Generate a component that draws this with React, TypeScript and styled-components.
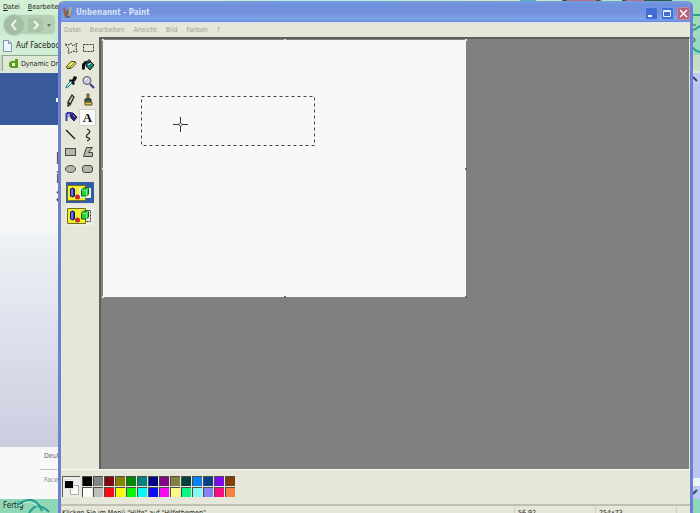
import React from "react";
import styled, { createGlobalStyle } from "styled-components";

const GlobalStyle = createGlobalStyle`
  * { box-sizing: border-box; }
  body { margin: 0; overflow: hidden; font: 8px/12px "DejaVu Sans Condensed", "DejaVu Sans", Tahoma, sans-serif; color: #222; }
  button { font: inherit; padding: 0; border: 0; background: none; color: inherit; }
  svg { display: block; flex: none; }
`;

const Desktop = styled.div`
  position: relative;
  height: 100vh;
  overflow: hidden;
`;

/* ---------- browser behind ---------- */
const Browser = styled.div`
  display: flex;
  flex-direction: column;
  height: 100%;
  background: #cfedcf;
`;
const BrowserMenu = styled.nav`
  display: flex;
  gap: 8px;
  height: 14px;
  padding: 0 0 0 3px;
  background: linear-gradient(90deg, #d3f0d5 0 30%, #bde9ef 45%, #cfeccb 70%, #9fddbd);
  font-size: 7px;
  line-height: 14px;
  u { text-underline-offset: 1px; }
  svg { margin-left: auto; }
`;
const NavBar = styled.div`
  display: flex;
  align-items: center;
  justify-content: space-between;
  height: 22px;
  padding-left: 2px;
  background: linear-gradient(90deg, #cdebd0, #a0dcb9);
`;
const Bookmarks = styled.div`
  display: flex;
  align-items: center;
  gap: 4px;
  height: 19px;
  padding-left: 3px;
  background: linear-gradient(90deg, #d4efd6, #9bd9bd);
  a { flex: 1; color: #222; text-decoration: none; white-space: nowrap; }
`;
const TabStrip = styled.div`
  display: flex;
  height: 18px;
  padding-left: 2px;
  background: #c9dcc6;
  border-bottom: 2px solid #dfe8da;
`;
const BrowserTab = styled.button`
  display: flex;
  align-items: center;
  gap: 3px;
  width: 100px;
  padding-left: 6px;
  border: 1px solid #8fa78d;
  border-bottom: 0;
  background: #dde9d5;
  font-size: 7px;
  white-space: nowrap;
`;
const Content = styled.div`
  flex: 1;
  min-height: 0;
  display: flex;
`;
const WebPage = styled.main`
  flex: 1;
  display: flex;
  flex-direction: column;
`;
const BlueBanner = styled.header`
  display: flex;
  align-items: center;
  height: 52px;
  padding: 2px 0 0 56px;
  background: #38599b;
  &::before { content: ""; width: 3px; height: 4px; background: #fff; }
`;
const Article = styled.section`
  flex: 1;
  padding: 24px 0 0 56px;
  background: linear-gradient(#f8f8f9 30%, #eaf0f3 38%, #e0e3ee 60%, #ccccdf);
  color: #1f3564;
  font: bold 16px/19px "Liberation Sans", Arial, sans-serif;
`;
const PageFooter = styled.footer`
  height: 52px;
  padding: 3px 0 0 40px;
  background: #f8f8f9;
  color: #666;
  font-size: 7px;
  div { height: 19px; padding-left: 4px; }
  div + div { border-top: 1px solid #c4c4c6; padding-top: 4px; color: #888; }
`;
const ScrollTrack = styled.div`
  display: flex;
  flex-direction: column;
  width: 9px;
  background: #b9c6f3;
  padding-bottom: 1px;
`;
const ScrollGap = styled.div`
  flex: 1;
`;
const ScrollEnd = styled.div`
  height: 8px;
  background: #eaf6f8;
`;
const ScrollArrow = styled.button`
  height: 12px;
  background: #bccaf5;
  color: #36437b;
`;
const BrowserStatus = styled.div`
  height: 14px;
  padding: 1px 0 0 3px;
  display: flex;
  background: #8fd8b7;
  svg { margin: -1px 0 0 -6px; }
`;

/* ---------- Paint ---------- */
const PaintWindow = styled.section`
  position: absolute;
  inset: 1px 7px -15px 58px;
  display: flex;
  flex-direction: column;
  border: 3px solid #6b82d2;
  border-top: 0;
  border-radius: 6px 6px 0 0;
  background: #e6e7d9;
  overflow: hidden;
`;
const TitleBar = styled.header`
  display: flex;
  align-items: center;
  gap: 4px;
  height: 22px;
  margin: 0 -3px;
  padding: 3px 3px 0 5px;
  background: linear-gradient(#779ed9 0, #6f90de 20%, #7391dc 60%, #7da5ec 85%, #6a8bd8);
  border-bottom: 1px solid #dce5ee;
`;
const Title = styled.h1`
  flex: 1;
  margin: 0;
  color: #d7e4f8;
  font-size: 8px;
  line-height: 14px;
`;
const Controls = styled.div`
  display: flex;
  gap: 3px;
`;
const ControlButton = styled.button<{ $close?: boolean }>`
  width: 13px;
  height: 13px;
  border-radius: 2px;
  border: 1px solid ${(p) => (p.$close ? "#c08aa4" : "#7398ea")};
  background: ${(p) => (p.$close ? "#b8617c" : "#426cd6")};
`;
const MenuBar = styled.nav`
  display: flex;
  gap: 9px;
  height: 14px;
  padding-left: 3px;
  color: #a0a196;
  font-size: 7px;
`;
const Workspace = styled.div`
  flex: 1;
  min-height: 0;
  display: flex;
`;
const ToolBox = styled.aside`
  width: 38px;
  padding: 2px 0 0 1px;
`;
const ToolGrid = styled.div`
  display: grid;
  grid-template-columns: 17px 17px;
  grid-auto-rows: 17px;
  align-content: space-between;
  height: 139px;
`;
const Tool = styled.button<{ $active?: boolean }>`
  display: grid;
  place-items: center;
  border-radius: 1px;
  background: ${(p) => (p.$active ? "#fbfbfa" : "transparent")};
  box-shadow: ${(p) => (p.$active ? "0 0 0 1px #d0d1ca inset" : "none")};
`;
const TextGlyph = styled.span`
  font: bold 13px/15px "Liberation Serif", serif;
  color: #111;
`;
const Options = styled.div`
  display: grid;
  gap: 2px;
  padding: 4px 0 0 4px;
`;
const Option = styled.button<{ $active?: boolean }>`
  display: grid;
  place-items: center start;
  width: 28px;
  height: 21px;
  background: ${(p) => (p.$active ? "#315da5" : "#ecece4")};
`;
const CanvasArea = styled.div`
  flex: 1;
  display: flex;
  align-items: flex-start;
  border: solid #5f5f5c;
  border-width: 2px 0 0 2px;
  border-right: 1px solid #e6e7d9;
  background: #808080;
  padding: 1px 0 0 2px;
`;
const Paper = styled.div`
  position: relative;
  width: 363px;
  height: 257px;
  background: #f8f8f8;
`;
const Handle = styled.i<{ $x: string; $y: string; $dark?: boolean }>`
  position: absolute;
  left: ${(p) => p.$x};
  top: ${(p) => p.$y};
  width: 2px;
  height: 2px;
  margin: -1px;
  background: ${(p) => (p.$dark ? "#64648c" : "#e9e9e2")};
`;
const Selection = styled.svg`
  position: absolute;
  left: 38px;
  top: 56px;
`;
const PaletteBar = styled.div`
  display: flex;
  gap: 2px;
  height: 35px;
  padding: 6px 0 0 1px;
  border-top: 1px solid #fafaf4;
`;
const CurrentColors = styled.div`
  width: 18px;
  height: 21px;
  border: solid #5b5b57;
  border-width: 1px 0 0 1px;
  background: #eeeee8;
`;
const Swatches = styled.div`
  display: grid;
  grid-template-columns: repeat(14, 10px);
  grid-auto-rows: 10px;
  gap: 1px;
`;
const Swatch = styled.button<{ $color: string }>`
  background: ${(p) => p.$color};
  border: solid;
  border-width: 1px 0 0 1px;
  border-color: #4b4b46;
`;
const StatusBar = styled.footer`
  display: flex;
  height: 21px;
  border-top: 2px solid #bfc0b2;
  padding-top: 1px;
  color: #222;
  font-size: 7px;
`;
const StatusText = styled.div`
  flex: 1;
  padding-left: 1px;
`;
const StatusCell = styled.div<{ $width: number }>`
  width: ${(p) => p.$width}px;
  border-left: 1px solid #cdcec0;
  padding-left: 3px;
`;

const tools: { name: string; art: React.ReactNode }[] = [
  { name: "Freihandauswahl", art: <path d="M1 3l4 1 2-2 2 3 4-3-1 5 1 4-4-1-3 2-2 0 1-4z" fill="none" stroke="#222" strokeDasharray="2 1" /> },
  { name: "Auswahl", art: <rect x="2.5" y="3.5" width="10" height="7" fill="none" stroke="#333" strokeDasharray="2 1" /> },
  { name: "Radierer", art: <><path d="M2 9l5-5.500h4l1 2-5 5H3z" fill="#f2ee68" stroke="#504c18" /><path d="M2 9h4l5-5M6 9l1 2" fill="none" stroke="#77732f" /></> },
  { name: "Farbfüller", art: <><path d="M5 6l4-3 4 4-4 5-4-4z" fill="#17877d" stroke="#111" /><path d="M7 5V2h2v3" fill="none" stroke="#111" /><path d="M1 11V6l3-3h3L4 7v4l-2 1z" fill="#111" /><path d="M7 7l3-2" stroke="#e6f5f0" /></> },
  { name: "Farbauswahl", art: <><path d="M6 4l2 1 2-4 3 1-1 3-2 2 1 2-2 1-4-4z" fill="#111" /><path d="M7 6L3 10l-1 3 2-1 4-4z" fill="#b8f0ee" stroke="#167d80" /></> },
  { name: "Lupe", art: <><circle cx="6" cy="5.500" r="4" fill="#c4cde6" stroke="#555" /><path d="M9 9l4 4" stroke="#3c3687" strokeWidth="2" /><path d="M4 5l2-2" stroke="#fff" /></> },
  { name: "Stift", art: <path d="M8 2l2 2-4 8-2 1V9zM4 9l2 2" fill="#c9c59a" stroke="#222" strokeWidth="1.200" /> },
  { name: "Pinsel", art: <><path d="M6 1h2v5H6z" fill="#a19c41" stroke="#555022" /><path d="M4 6h6v3H4z" fill="#356a65" stroke="#222" /><path d="M4 9h7v3H4z" fill="#d4ba47" stroke="#5b5125" /></> },
  { name: "Airbrush", art: <><path d="M6 4l3-1 4 4-3 4-3-3z" fill="#282276" stroke="#202050" /><path d="M2.500 11V5l1-2h5" fill="none" stroke="#3c38ad" strokeWidth="2" /><path d="M1 4h2M5 5v2" stroke="#5551b7" /><path d="M9 5l2 2" stroke="#9b9fe0" /></> },
  { name: "Text", art: null },
  { name: "Linie", art: <path d="M2 2l9 9" stroke="#111" strokeWidth="1.200" /> },
  { name: "Kurve", art: <path d="M6 1q5 2 1 5t1 4q2 1-2 3" fill="none" stroke="#222" strokeWidth="1.200" /> },
  { name: "Rechteck", art: <rect x="1.500" y="3.500" width="10" height="7" fill="#b5b6ad" stroke="#454540" /> },
  { name: "Vieleck", art: <path d="M5.500 2.500h6l-4 5h4v4h-9z" fill="#b5b6ad" stroke="#454540" /> },
  { name: "Ellipse", art: <ellipse cx="6.500" cy="7" rx="5" ry="3.500" fill="#b5b6ad" stroke="#454540" /> },
  { name: "Abgerundetes Rechteck", art: <rect x="1.500" y="3.500" width="10" height="7" rx="2.500" fill="#b5b6ad" stroke="#454540" /> },
];

const colors = [
  "#000", "#858585", "#820812", "#858400", "#068609", "#078480", "#020285", "#820686", "#80823f", "#063f3c", "#0682f2", "#06428a", "#7f08f3", "#814007",
  "#fafafa", "#bebebe", "#fa0c16", "#fbfb09", "#07f709", "#08f7f6", "#0c0cf5", "#f80bf1", "#f9fa83", "#07f783", "#83f8f7", "#8184f2", "#f80b83", "#f68042",
];

const ShapesArt = ({ opaque }: { opaque?: boolean }) => (
  <svg width="26" height="18" viewBox="0 0 26 18" aria-hidden="true">
    <path d="M1.500 1.500h18v15h-18z" fill="#f5ef2b" stroke="#74731b" />
    {opaque
      ? <rect x="13" y="4" width="12" height="10" fill="#e6f1de" />
      : <path d="M19.500 3.500h5v11h-5" fill="none" stroke="#333" strokeDasharray="2 1" />}
    <path d="M4.500 5q2-2 4 0v7q-2 2-4 0z" fill="#2430c9" stroke="#111657" />
    <path d="M6 5v7" stroke="#a1b9fa" />
    <circle cx="11.500" cy="13" r="2.500" fill="#cf2538" />
    <path d="M15.500 6l2-2h5v6l-2 2h-5z" fill="#27cf38" stroke="#125f22" />
    <path d="M16 6.500h4.500V12M20.500 6l2-2" fill="none" stroke="#7bf083" />
  </svg>
);

export default function App() {
  return (
    <>
      <GlobalStyle />
      <Desktop>
        <Browser>
          <BrowserMenu>
            <span><u>D</u>atei</span><span><u>B</u>earbeiten</span>
            <svg width="180" height="3" viewBox="0 0 180 3" aria-hidden="true">
              <path d="M0 1h16" stroke="#5aa9c2" strokeWidth="3" />
              <path d="M44 1h38M103 1h22" stroke="#b86e91" strokeWidth="3" />
              <path d="M42 1h5M76 1h4M102 1h4M124 1h28" stroke="#2c5a4b" strokeWidth="3" />
            </svg>
          </BrowserMenu>
          <NavBar>
            <svg width="54" height="22" viewBox="0 0 54 22" aria-hidden="true">
              <path d="M12 1h36q5 0 5 5v9q0 5-5 5H12z" fill="#b6d0b5" />
              <circle cx="12" cy="11" r="10.500" fill="#a4bea5" stroke="#bad1ba" />
              <path d="M26 4h11q4 0 4 4v6q0 4-4 4H26z" fill="#a9c4a9" />
              <path d="M14 6l-4 5 4 5M32 7l4 4-4 4" fill="none" stroke="#f2faef" strokeWidth="2" />
              <path d="M45 10h4l-2 3z" fill="#617961" />
            </svg>
            <svg width="9" height="22" viewBox="0 0 9 22" aria-hidden="true">
              <path d="M0 1h9M0 17q5-2 9-5" fill="none" stroke="#2f9f96" strokeWidth="2" />
              <path d="M1 11h4" stroke="#265d58" />
            </svg>
          </NavBar>
          <Bookmarks>
            <svg width="9" height="12" viewBox="0 0 9 12" aria-hidden="true"><path d="M.5.5h5l3 3v8h-8z" fill="#edf3ff" stroke="#7b93bd" /><path d="M5.500.5v3h3" fill="none" stroke="#7b93bd" /></svg>
            <a href="#facebook">Auf Facebook</a>
            <svg width="9" height="19" viewBox="0 0 9 19" aria-hidden="true">
              <circle cx="2" cy="4" r="2" fill="none" stroke="#265d58" />
              <path d="M0 9q3 6 9 7" fill="none" stroke="#2f9f96" strokeWidth="2" />
            </svg>
          </Bookmarks>
          <TabStrip>
            <BrowserTab>
              <svg width="9" height="9" viewBox="0 0 9 9" aria-hidden="true"><path d="M6 0h3v9H2L0 7V4l2-2h4z" fill="#559e18" /><path d="M3 4h3v3H3z" fill="#e4f6cf" /></svg>
              Dynamic Drive
            </BrowserTab>
          </TabStrip>
          <Content>
            <WebPage>
              <BlueBanner />
              <Article>F<br />i<br />3</Article>
              <PageFooter><div>Deutsch</div><div>Facebook</div></PageFooter>
            </WebPage>
            <ScrollTrack>
              <ScrollArrow aria-label="Nach oben">
                <svg width="9" height="12" viewBox="0 0 9 12"><path d="M2 4l4 4" stroke="currentColor" strokeWidth="2" /></svg>
              </ScrollArrow>
              <ScrollGap />
              <ScrollEnd />
              <ScrollArrow aria-label="Nach unten">
                <svg width="9" height="12" viewBox="0 0 9 12"><path d="M2 8l4-4" stroke="currentColor" strokeWidth="2" /></svg>
              </ScrollArrow>
            </ScrollTrack>
          </Content>
          <BrowserStatus>
            Fertig
            <svg width="42" height="14" viewBox="0 0 42 14" aria-hidden="true"><path d="M0 6Q14-4 22 6l3 6M12 14q8-13 20-1" fill="none" stroke="#279c92" strokeWidth="2" /><path d="M2 7Q14-2 21 9" fill="none" stroke="#c1ead2" /></svg>
          </BrowserStatus>
        </Browser>

        <PaintWindow>
          <TitleBar>
            <svg width="9" height="12" viewBox="0 0 9 12" aria-hidden="true">
              <path d="M1 4h7l-1 7H2z" fill="#626d7b" />
              <path d="M1 1l2 8" stroke="#b35342" strokeWidth="2" /><path d="M8 0L6 9" stroke="#c9ad6b" strokeWidth="2" /><path d="M4.500 3v7" stroke="#3e7c6a" />
            </svg>
            <Title>Unbenannt - Paint</Title>
            <Controls>
              <ControlButton aria-label="Minimieren"><svg width="11" height="11"><path d="M2 8h4" stroke="#fff" strokeWidth="2" /></svg></ControlButton>
              <ControlButton aria-label="Maximieren"><svg width="11" height="11"><path d="M1.500 2.500h7v6h-7zM1.500 3.500h7" fill="none" stroke="#e7f0ff" /></svg></ControlButton>
              <ControlButton $close aria-label="Schließen"><svg width="11" height="11"><path d="M2 2l7 7M9 2L2 9" stroke="#fff" strokeWidth="1.500" /></svg></ControlButton>
            </Controls>
          </TitleBar>
          <MenuBar>
            {["Datei", "Bearbeiten", "Ansicht", "Bild", "Farben", "?"].map((m) => <button key={m}>{m}</button>)}
          </MenuBar>
          <Workspace>
            <ToolBox>
              <ToolGrid>
                {tools.map((t) => (
                  <Tool key={t.name} aria-label={t.name} $active={t.name === "Text"}>
                    {t.art ? <svg width="14" height="14" viewBox="0 0 14 14">{t.art}</svg> : <TextGlyph>A</TextGlyph>}
                  </Tool>
                ))}
              </ToolGrid>
              <Options>
                <Option $active aria-label="Deckend"><ShapesArt opaque /></Option>
                <Option aria-label="Transparent"><ShapesArt /></Option>
              </Options>
            </ToolBox>
            <CanvasArea>
              <Paper>
                <Handle $x="0%" $y="0%" /><Handle $x="50%" $y="0%" /><Handle $x="100%" $y="0%" />
                <Handle $x="0%" $y="50%" /><Handle $x="100%" $y="50%" $dark />
                <Handle $x="0%" $y="100%" /><Handle $x="50%" $y="100%" $dark /><Handle $x="100%" $y="100%" $dark />
                <Selection width="175" height="51" viewBox="0 0 175 51" aria-hidden="true">
                  <rect x=".5" y=".5" width="173" height="49" fill="none" stroke="#444" strokeDasharray="3 3" />
                  <path d="M39.500 21v6m0 3v6M32 28.500h6m3 0h6" stroke="#333" />
                  <circle cx="39.500" cy="28.500" r="1.500" fill="none" stroke="#555" />
                </Selection>
              </Paper>
            </CanvasArea>
          </Workspace>
          <PaletteBar>
            <CurrentColors>
              <svg width="17" height="20" viewBox="0 0 17 20" aria-label="Aktuelle Farben">
                <path d="M7.500 8.500h8v9h-8z" fill="#fafafa" stroke="#aaa" />
                <path d="M1.500 2.500h9v9h-9z" fill="#fafafa" stroke="#ddd" />
                <path d="M2 4h8v7H2z" fill="#000" />
              </svg>
            </CurrentColors>
            <Swatches>
              {colors.map((c) => <Swatch key={c} $color={c} aria-label={`Farbe ${c}`} />)}
            </Swatches>
          </PaletteBar>
          <StatusBar>
            <StatusText>Klicken Sie im Menü "Hilfe" auf "Hilfethemen".</StatusText>
            <StatusCell $width={81}>56,92</StatusCell>
            <StatusCell $width={81}>254x73</StatusCell>
            <StatusCell $width={14} />
          </StatusBar>
        </PaintWindow>
      </Desktop>
    </>
  );
}
